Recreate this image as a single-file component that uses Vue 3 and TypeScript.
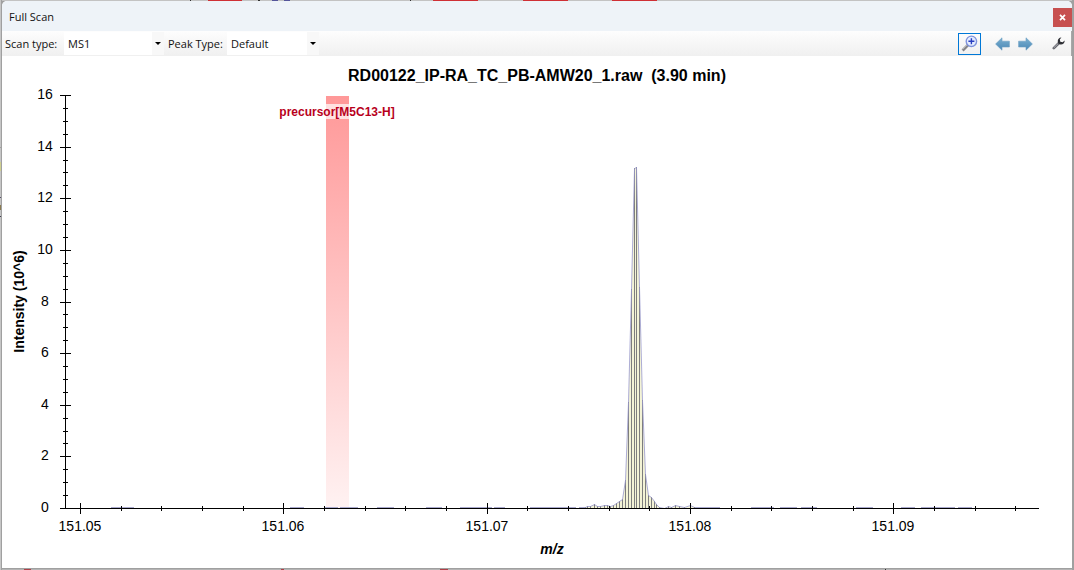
<script setup lang="ts">
import { computed, onBeforeUnmount, onMounted, ref } from 'vue'

interface Peak {
  mz: number
  intensity: number
}

interface Tick {
  pos: number
  major: boolean
  label: string
}

// m/z values are kept as hundred-thousandths above 151
const X_MIN = 4926
const X_MAX = 9716
const Y_MAX = 16
const MARGIN = { left: 63, right: 33, top: 39, bottom: 60 }

const scanType = ref('MS1')
const peakType = ref('Default')

const host = ref<HTMLElement | null>(null)
const width = ref(1070)
const height = ref(512)
let observer: ResizeObserver | null = null

function measure(): void {
  if (host.value) {
    width.value = host.value.clientWidth
    height.value = host.value.clientHeight
  }
}

onMounted(() => {
  measure()
  observer = new ResizeObserver(measure)
  if (host.value) observer.observe(host.value)
})
onBeforeUnmount(() => observer?.disconnect())

const plot = computed(() => ({
  left: MARGIN.left,
  right: width.value - MARGIN.right,
  top: MARGIN.top,
  bottom: height.value - MARGIN.bottom,
}))

function sx(v: number): number {
  const p = plot.value
  return Math.round(p.left + ((v - X_MIN) / (X_MAX - X_MIN)) * (p.right - p.left))
}
function sy(v: number): number {
  const p = plot.value
  return Math.round(p.bottom - (v / Y_MAX) * (p.bottom - p.top))
}

const xTicks = computed<Tick[]>(() => {
  const out: Tick[] = []
  for (let v = 5000; v <= X_MAX; v += 200) {
    out.push({ pos: sx(v), major: v % 1000 === 0, label: (151 + v / 100000).toFixed(2) })
  }
  return out
})

const yTicks = computed<Tick[]>(() => {
  const out: Tick[] = []
  for (let v = 0; v <= Y_MAX; v += 0.5) {
    out.push({ pos: sy(v), major: v % 2 === 0, label: String(v) })
  }
  return out
})

const rawPeaks: [number, number][] = [
  [7470, 0], [7482, 0.04], [7495, 0.06], [7507, 0.09], [7526, 0.16], [7541, 0.08], [7556, 0.09],
  [7576, 0.12], [7590, 0.1], [7605, 0.06], [7620, 0.11], [7635, 0.18], [7652, 0.26], [7667, 0.34],
  [7681, 1.1], [7696, 4.1], [7709, 8.47], [7722, 13.18], [7735, 13.22], [7750, 8.57],
  [7765, 4.2], [7780, 1.3], [7795, 0.5], [7807, 0.42], [7822, 0.28], [7834, 0.14],
  [7846, 0.05], [7871, 0], [7890, 0.08], [7905, 0.04], [7925, 0.1], [7945, 0.06],
  [7970, 0.03], [7999, 0.1], [8020, 0.03],
]
const peaks: Peak[] = rawPeaks.map(([mz, intensity]) => ({ mz, intensity }))

const noise: [number, number][] = [
  [5150, 5263], [6031, 6100], [6198, 6267], [6277, 6365], [6459, 6542], [6700, 6779],
  [6867, 7028], [7035, 7088], [7211, 7438], [7453, 7490], [7999, 8146], [8299, 8412],
  [8442, 8525], [8545, 8624], [8815, 8899], [9037, 9106], [9135, 9302], [9317, 9386],
]

const outline = computed(() =>
  peaks.map((p) => `${sx(p.mz) + 0.5},${sy(p.intensity) + 0.5}`).join(' '),
)
const area = computed(
  () =>
    `${sx(peaks[0].mz)},${plot.value.bottom} ${outline.value} ${sx(peaks[peaks.length - 1].mz)},${plot.value.bottom}`,
)

const band = computed(() => ({ x: sx(6208), w: sx(6321) - sx(6208) }))
const bandMid = computed(() => band.value.x + Math.floor(band.value.w / 2))
const plotMidX = computed(() => (plot.value.left + plot.value.right) / 2)
const plotMidY = computed(() => (plot.value.top + plot.value.bottom) / 2)
</script>

<template>
  <div class="desktop">
    <div class="strip" aria-hidden="true"></div>
    <main class="window">
      <header class="titlebar">
        <h1>Full Scan</h1>
        <button type="button" class="close" aria-label="Close">
          <svg width="7" height="7" viewBox="0 0 7 7"><path d="M1 .8 6 6.2M6 .8 1 6.2" stroke="#fff" stroke-width="1.7" /></svg>
        </button>
      </header>

      <div class="toolbar">
        <label for="scan-type">Scan type:</label>
        <span class="combo scan">
          <select id="scan-type" v-model="scanType">
            <option>MS1</option>
          </select>
          <i></i>
        </span>
        <label for="peak-type">Peak Type:</label>
        <span class="combo peak">
          <select id="peak-type" v-model="peakType">
            <option>Default</option>
          </select>
          <i></i>
        </span>
        <span class="spacer"></span>
        <button type="button" class="tool zoom" aria-label="Zoom to isotope range" aria-pressed="true">
          <svg width="17" height="17" viewBox="0 0 17 17">
            <path d="M1.6 15.4 7 10" stroke="#85858a" stroke-width="2.8" />
            <path d="M1.3 14.4 6.2 9.5" stroke="#cccccc" stroke-width="1" />
            <circle cx="10.4" cy="6.3" r="5.2" fill="#e4ecff" stroke="#7f93dc" stroke-width="1.4" />
            <path d="M7.4 6.3h6M10.4 3.3v6" stroke="#2a3fc0" stroke-width="1.4" />
          </svg>
        </button>
        <button type="button" class="tool prev" aria-label="Previous scan">
          <svg width="15" height="14" viewBox="0 0 15 14">
            <path d="M.6 7 7 .8v3.4h7.4v5.8H7v3.2z" fill="url(#arrow-blue)" stroke="#6ba0c4" stroke-width=".6" />
          </svg>
        </button>
        <button type="button" class="tool next" aria-label="Next scan">
          <svg width="15" height="14" viewBox="0 0 15 14">
            <defs>
              <linearGradient id="arrow-blue" x1="0" y1="0" x2="0" y2="1">
                <stop offset="0" stop-color="#7bb0d0" />
                <stop offset="1" stop-color="#4b88b6" />
              </linearGradient>
            </defs>
            <path d="M14.4 7 8 .8v3.4H.6v5.8H8v3.2z" fill="url(#arrow-blue)" stroke="#6ba0c4" stroke-width=".6" />
          </svg>
        </button>
        <button type="button" class="tool wrench" aria-label="Properties">
          <svg width="13" height="13" viewBox="0 0 13 13">
            <path d="M1.8 11.2 7 6" stroke="#66676e" stroke-width="2.6" stroke-linecap="round" />
            <path d="M1.8 10.8 6 6.7" stroke="#b4b5bc" stroke-width=".9" />
            <path d="M9.4.6A3.5 3.5 0 0 0 5.8 4.6 3.1 3.1 0 0 0 8.6 7.6 3.7 3.7 0 0 0 12.6 3.4L10.7 5.3 8.3 4.7 7.8 2.4z" fill="#2e2f34" />
          </svg>
        </button>
      </div>

      <section ref="host" class="chart">
        <svg :width="width" :height="height" role="img" aria-label="Mass spectrum">
          <defs>
            <linearGradient id="band-fill" x1="0" y1="0" x2="0" y2="1">
              <stop offset="0" stop-color="#ff9898" />
              <stop offset="1" stop-color="#fff2f2" />
            </linearGradient>
          </defs>

          <rect
            :x="band.x" :y="plot.top + 1" :width="band.w" :height="plot.bottom - plot.top - 1"
            fill="url(#band-fill)"
          />

          <g class="noise">
            <rect v-for="n in noise" :key="n[0]" :x="sx(n[0])" :y="plot.bottom - 1" :width="sx(n[1]) - sx(n[0])" height="1" />
          </g>

          <polygon class="area" :points="area" />
          <g class="sticks">
            <rect
              v-for="p in peaks" :key="p.mz" :x="sx(p.mz)" :y="sy(p.intensity)" width="1"
              :height="plot.bottom - sy(p.intensity)"
            />
          </g>
          <polyline class="outline" :points="outline" />

          <g class="axis">
            <rect :x="plot.left - 5" :y="plot.bottom" :width="plot.right - plot.left + 5" height="1" />
            <rect :x="plot.left" :y="plot.top" width="1" :height="plot.bottom - plot.top" />
            <rect
              v-for="t in xTicks" :key="'x' + t.pos" :x="t.pos" :y="plot.bottom - (t.major ? 5 : 2)"
              width="1" :height="t.major ? 11 : 5"
            />
            <rect
              v-for="t in yTicks" :key="'y' + t.pos" :x="plot.left - (t.major ? 5 : 2)" :y="t.pos"
              :width="t.major ? 11 : 5" height="1"
            />
          </g>

          <g class="scale">
            <template v-for="t in xTicks" :key="'xl' + t.pos">
              <text v-if="t.major" :x="t.pos" :y="plot.bottom + 23">{{ t.label }}</text>
            </template>
            <template v-for="t in yTicks" :key="'yl' + t.pos">
              <text v-if="t.major" :x="plot.left - 20" :y="t.pos + 4">{{ t.label }}</text>
            </template>
          </g>

          <rect :x="bandMid - 60" :y="plot.top + 9" width="120" height="15" fill="#fff" fill-opacity=".7" />
          <text class="annotation" :x="bandMid" :y="plot.top + 21">precursor[M5C13-H]</text>

          <text class="heading" :x="width / 2" y="25">RD00122_IP-RA_TC_PB-AMW20_1.raw&nbsp; (3.90 min)</text>
          <text class="axis-title italic" :x="plotMidX" :y="plot.bottom + 46">m/z</text>
          <text class="axis-title" :transform="`translate(22 ${plotMidY}) rotate(-90)`">Intensity (10^6)</text>
        </svg>
      </section>
    </main>
    <div class="strip below" aria-hidden="true"></div>
  </div>
</template>

<style>
html,
body,
#app {
  height: 100%;
  margin: 0;
}
</style>

<style scoped>
.desktop {
  box-sizing: border-box;
  height: 100%;
  padding: 0 2px;
  display: flex;
  flex-direction: column;
  overflow: hidden;
  background:
    linear-gradient(
      #c6c6c6 0 147px, #a0a0a0 147px 148px, #c6c6c6 148px 162px, #d0d090 162px 171px,
      #c6c6c6 171px 197px, #55506a 197px 198px, #c6c6c6 198px 205px, #8a7a50 205px 210px,
      #c6c6c6 210px 216px, #404050 216px 217px, #c6c6c6 217px
    ) 0 0 / 1px 100% no-repeat,
    #a0a0a0;
  font-family: "Open Sans", "Noto Sans", sans-serif;
  font-size: 11px;
  color: #111;
}
.strip {
  flex: none;
  height: 1px;
  background: linear-gradient(
    90deg,
    #c3c3c3 0 188px, #333 188px 189px, #c3c3c3 189px 206px, #cf2f35 206px 240px,
    #c3c3c3 240px 256px, #333 256px 258px, #c3c3c3 258px 270px, #55559a 270px 276px,
    #c3c3c3 276px 282px, #55559a 282px 288px, #c3c3c3 288px 408px, #333 408px 409px,
    #c3c3c3 409px 431px, #cf2f35 431px 476px, #c3c3c3 476px 521px, #cf2f35 521px 566px,
    #c3c3c3 566px 610px, #cf2f35 610px 655px, #c3c3c3 655px
  );
}
.strip.below {
  border-top: 1px solid #a0a0a0;
  background: linear-gradient(
    90deg,
    #b4b4b4 0 22px, #b04048 22px 29px, #b4b4b4 29px 279px, #b04048 279px 282px,
    #b4b4b4 282px 438px, #b04048 438px 446px, #b4b4b4 446px 883px, #333 883px 884px, #b4b4b4 884px
  );
}
.window {
  flex: 1;
  min-height: 0;
  display: flex;
  flex-direction: column;
  background: #fff;
  border-radius: 5px 5px 0 0;
  overflow: hidden;
}
.titlebar {
  flex: none;
  height: 30px;
  display: flex;
  align-items: center;
  justify-content: space-between;
  padding: 0 0 0 7px;
  background: #eef3f8;
}
h1 {
  margin: 0;
  font-size: 11px;
  font-weight: 400;
}
button {
  padding: 0;
  border: 0;
  background: none;
  display: flex;
  align-items: center;
  justify-content: center;
}
.close {
  width: 19px;
  height: 19px;
  margin-top: 3px;
  background: #c75050;
}
.toolbar {
  flex: none;
  height: 25px;
  display: flex;
  align-items: center;
  padding: 0 1px 0 3px;
  border-right: 1px solid #a8a8a8;
  background: linear-gradient(#fdfdfd, #f0f0f0);
}
.toolbar label {
  width: 59px;
  white-space: nowrap;
}
.combo {
  position: relative;
  display: flex;
  height: 23px;
  margin-right: 4px;
  background: #fff;
}
.combo.scan {
  width: 100px;
}
.combo.peak {
  width: 92px;
}
.combo select {
  appearance: none;
  width: 100%;
  border: 0;
  padding: 0 14px 0 4px;
  background: transparent;
  font: inherit;
  color: inherit;
}
.combo i {
  position: absolute;
  right: 0;
  top: 0;
  width: 12px;
  height: 100%;
  background: #f8f8f8;
  pointer-events: none;
}
.combo i::after {
  content: "";
  position: absolute;
  left: 3px;
  top: 10px;
  border: 3px solid transparent;
  border-top-color: #000;
  border-bottom: 0;
}
.spacer {
  flex: 1;
}
.tool {
  width: 23px;
  height: 22px;
}
.zoom {
  border: 1px solid #0078d7;
  margin-right: 10px;
}
.wrench {
  margin-left: 10px;
}
.chart {
  flex: 1;
  min-height: 0;
  overflow: hidden;
}
.chart svg {
  display: block;
  font-family: "Liberation Sans", Arial, sans-serif;
}
.chart text {
  text-anchor: middle;
}
.axis rect {
  fill: #000;
}
.noise rect {
  fill: #a9a9cd;
}
.sticks rect {
  fill: #7d7d7d;
}
.area {
  fill: #f3f3d6;
}
.outline {
  fill: none;
  stroke: #9a9ad0;
  stroke-width: 1;
  stroke-opacity: 0.8;
}
.scale text {
  font-size: 14px;
}
.annotation {
  font-size: 12px;
  font-weight: 700;
  fill: #b8001c;
}
.heading {
  font-size: 16px;
  font-weight: 700;
}
.axis-title {
  font-size: 14px;
  font-weight: 700;
}
.italic {
  font-style: italic;
}
</style>
